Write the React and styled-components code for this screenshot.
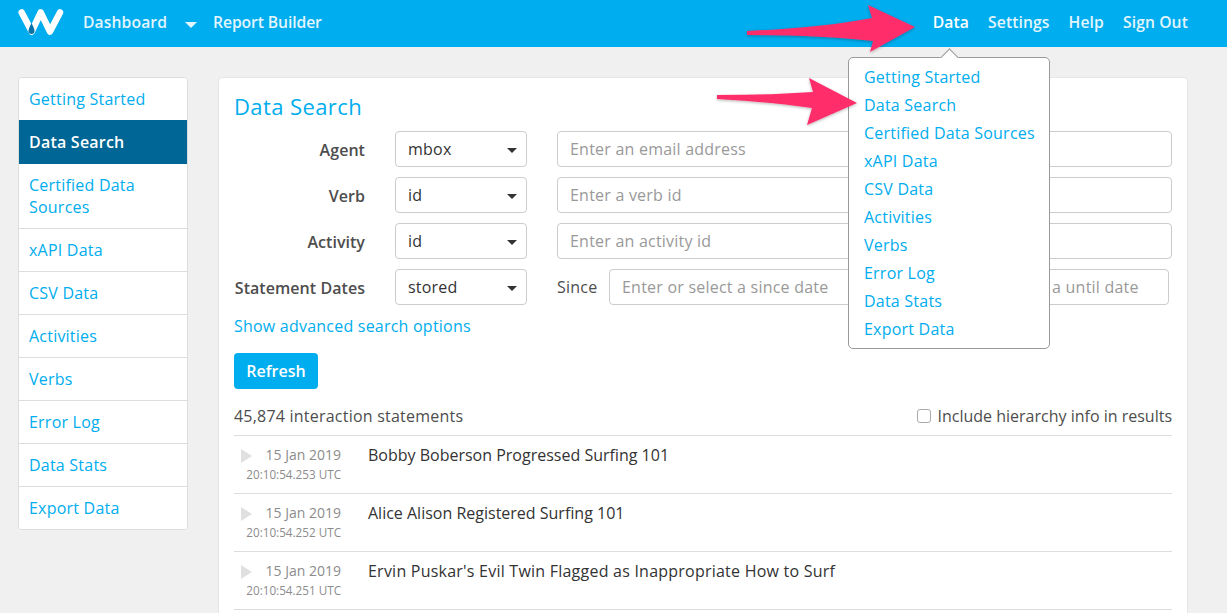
import React from 'react';
import styled, { createGlobalStyle } from 'styled-components';

const BLUE = '#00adee';
const FONT = '"Open Sans", "Liberation Sans", sans-serif';

const GlobalStyle = createGlobalStyle`
  html, body {
    margin: 0;
    height: 613px;
    overflow: hidden;
    background: #f0f0f0;
    font-family: ${FONT};
    font-size: 16px;
    letter-spacing: 0.22px;
    color: #4d4d4d;
  }
  * { box-sizing: border-box; }
`;

const Page = styled.div`
  position: relative;
  width: 1227px;
  height: 613px;
  overflow: hidden;
`;

const TopBar = styled.header`
  display: flex;
  align-items: center;
  height: 47px;
  padding: 0 39px 3px 18px;
  background: ${BLUE};
`;

const Logo = styled.svg`
  width: 46px;
  height: 27px;
  margin-right: 19px;
`;

const NavGroup = styled.nav`
  display: flex;
  align-items: center;
  gap: ${({ $gap }) => $gap}px;
  margin-left: ${({ $push }) => ($push ? 'auto' : '0')};
`;

const NavLink = styled.a`
  color: ${({ $active }) => ($active ? '#fff' : '#e3f5fd')};
  font-weight: 600;
  font-size: 15.7px;
  letter-spacing: ${({ $tight }) => ($tight ? '-0.1px' : '0.1px')};
`;

const Caret = styled.span`
  width: 0;
  height: 0;
  margin: 5px 16px 0 18px;
  border-left: 6px solid transparent;
  border-right: 6px solid transparent;
  border-top: 6px solid #e3f5fd;
`;

const Content = styled.div`
  display: flex;
  align-items: flex-start;
  gap: 30px;
  padding: 30px 39px 0 18px;
`;

const Sidebar = styled.aside`
  flex: 0 0 170px;
  background: #fff;
  border: 1px solid #ddd;
  border-radius: 4px;
  overflow: hidden;
`;

const SideItem = styled.a`
  display: block;
  padding: ${({ $active }) => ($active ? '11px 10px' : '10px')};
  line-height: 22px;
  color: ${({ $active }) => ($active ? '#fff' : BLUE)};
  background: ${({ $active }) => ($active ? '#006695' : '#fff')};
  font-weight: ${({ $active }) => ($active ? 600 : 500)};
  border-top: ${({ $plain }) => ($plain ? '0' : '1px solid #ddd')};
`;

const Panel = styled.main`
  flex: 1;
  height: 560px;
  padding: 15px 15px 0 15px;
  background: #fff;
  border: 1px solid #e6e6e6;
  border-radius: 4px;
`;

const Title = styled.h1`
  margin: 0 0 12px;
  font-size: 22px;
  letter-spacing: 0.4px;
  line-height: 26px;
  font-weight: 500;
  color: ${BLUE};
`;

const FormGrid = styled.div`
  display: grid;
  grid-template-columns: 131px 132px 1fr;
  column-gap: 30px;
  row-gap: 10px;
`;

const FieldLabel = styled.label`
  align-self: center;
  justify-self: end;
  padding-top: 2px;
  font-weight: 600;
  letter-spacing: 0.05px;
  white-space: nowrap;
`;

const SelectBox = styled.div`
  position: relative;
  display: flex;
  align-items: center;
  height: 36px;
  padding-left: 12px;
  border: 1px solid #ccc;
  border-radius: 4px;
  background: #fff;
  color: #333;
  font-weight: 500;

  &::after {
    content: '';
    position: absolute;
    right: 9px;
    top: 16px;
    border-left: 5px solid transparent;
    border-right: 5px solid transparent;
    border-top: 5px solid #333;
  }
`;

const TextBox = styled.div`
  display: flex;
  align-items: center;
  flex: ${({ $width }) => ($width ? `0 0 ${$width}px` : 1)};
  height: 36px;
  padding-left: 12px;
  border: 1px solid #ccc;
  border-radius: 4px;
  background: #fff;
  color: #999;
  font-weight: 500;
  white-space: nowrap;
  overflow: hidden;
`;

const DateRow = styled.div`
  display: flex;
  align-items: center;
  gap: 12px;
  padding-right: 3px;
`;

const DateLabel = styled.span`
  width: 40px;
  color: #4d4d4d;
  font-weight: 500;
`;

const AdvancedLink = styled.a`
  display: block;
  margin-top: 10px;
  line-height: 22px;
  color: ${BLUE};
  font-weight: 500;
`;

const RefreshButton = styled.button`
  display: block;
  margin-top: 16px;
  width: 84px;
  height: 36px;
  border: 0;
  border-radius: 4px;
  background: ${BLUE};
  color: #fff;
  font: 600 16px ${FONT};
`;

const CountRow = styled.div`
  display: flex;
  align-items: center;
  justify-content: space-between;
  height: 47px;
  padding-top: 8px;
  border-bottom: 1px solid #ddd;
  font-weight: 500;
`;

const CheckLabel = styled.label`
  display: flex;
  align-items: center;
  gap: 6px;
  letter-spacing: 0;
`;

const CheckBox = styled.span`
  width: 14px;
  height: 14px;
  border: 1px solid #aaa;
  border-radius: 3px;
  background: #fff;
`;

const StatementRow = styled.div`
  display: flex;
  align-items: flex-start;
  height: 58px;
  padding-top: 8px;
  border-bottom: 1px solid #ddd;
`;

const PlayMark = styled.span`
  flex: none;
  width: 0;
  height: 0;
  margin: 5px -12px 0 7px;
  border-top: 7px solid transparent;
  border-bottom: 7px solid transparent;
  border-left: 11px solid #e0e0e0;
`;

const StampCol = styled.div`
  flex: none;
  width: 101px;
  margin: 2px 27px 0 0;
  text-align: right;
  color: #8c8c8c;
  font-size: 14px;
  letter-spacing: 0;
  font-weight: 500;
  line-height: 18px;
  white-space: nowrap;
`;

const StampTime = styled.div`
  font-size: 11.7px;
  line-height: 20px;
`;

const StatementText = styled.div`
  color: #333;
  font-weight: 500;
  letter-spacing: ${({ $spacing }) => $spacing}px;
  line-height: 22px;
`;

const Dropdown = styled.div`
  position: absolute;
  top: 57px;
  left: 848px;
  width: 202px;
  height: 292px;
  padding: 5px 0 0 15px;
  background: #fff;
  border: 1px solid #999;
  border-radius: 5px;

  &::before {
    content: '';
    position: absolute;
    top: -7px;
    left: 94px;
    width: 12px;
    height: 12px;
    background: #fff;
    border-left: 1px solid #999;
    border-top: 1px solid #999;
    transform: rotate(45deg);
  }
`;

const DropItem = styled.a`
  display: block;
  height: 28px;
  line-height: 28px;
  color: ${BLUE};
  font-weight: 500;
  white-space: nowrap;
`;

const Annotation = styled.svg`
  position: absolute;
  top: 0;
  left: 0;
  width: 1227px;
  height: 613px;
  pointer-events: none;
`;

const sideItems = ['Getting Started', 'Data Search', 'Certified Data Sources', 'xAPI Data', 'CSV Data', 'Activities', 'Verbs', 'Error Log', 'Data Stats', 'Export Data'];

const fields = [
  ['Agent', 'mbox', 'Enter an email address'],
  ['Verb', 'id', 'Enter a verb id'],
  ['Activity', 'id', 'Enter an activity id'],
];

const statements = [
  ['20:10:54.253 UTC', 'Bobby Boberson Progressed Surfing 101', 0],
  ['20:10:54.252 UTC', 'Alice Alison Registered Surfing 101', 0],
  ['20:10:54.251 UTC', "Ervin Puskar's Evil Twin Flagged as Inappropriate How to Surf", 0.23],
];

const App = () => (
  <Page>
    <GlobalStyle />
    <TopBar>
      <Logo viewBox="0 0 46 27">
        <polyline points="3.7,3.5 13.7,22.5 22.7,3.5 32,22.5 42,3.5" fill="none" stroke="#fff" strokeWidth="6.5" strokeLinecap="round" strokeLinejoin="round" />
        <path d="M13.5 14 C11.5 18 10.5 20 10.5 22 a3 3 0 0 0 6 0 C16.5 20 15.5 18 13.5 14z" fill="#0b72a8" />
      </Logo>
      <NavGroup>
        <NavLink>Dashboard</NavLink>
        <Caret />
        <NavLink $tight>Report Builder</NavLink>
      </NavGroup>
      <NavGroup $push $gap={19}>
        <NavLink $active>Data</NavLink>
        <NavLink>Settings</NavLink>
        <NavLink>Help</NavLink>
        <NavLink>Sign Out</NavLink>
      </NavGroup>
    </TopBar>

    <Content>
      <Sidebar>
        {sideItems.map((item, i) => (
          <SideItem key={item} $plain={i < 3} $active={item === 'Data Search'}>{item}</SideItem>
        ))}
      </Sidebar>
      <Panel>
        <Title>Data Search</Title>
        <FormGrid>
          {fields.map(([label, value, hint]) => (
            <React.Fragment key={label}>
              <FieldLabel>{label}</FieldLabel>
              <SelectBox>{value}</SelectBox>
              <TextBox>{hint}</TextBox>
            </React.Fragment>
          ))}
          <FieldLabel>Statement Dates</FieldLabel>
          <SelectBox>stored</SelectBox>
          <DateRow>
            <DateLabel>Since</DateLabel>
            <TextBox>Enter or select a since date</TextBox>
            <DateLabel>Until</DateLabel>
            <TextBox $width={245}>Enter or select a until date</TextBox>
          </DateRow>
        </FormGrid>
        <AdvancedLink>Show advanced search options</AdvancedLink>
        <RefreshButton>Refresh</RefreshButton>
        <CountRow>
          <span>45,874 interaction statements</span>
          <CheckLabel><CheckBox />Include hierarchy info in results</CheckLabel>
        </CountRow>
        {statements.map(([time, text, spacing]) => (
          <StatementRow key={time}>
            <PlayMark />
            <StampCol>
              15 Jan 2019
              <StampTime>{time}</StampTime>
            </StampCol>
            <StatementText $spacing={spacing}>{text}</StatementText>
          </StatementRow>
        ))}
      </Panel>
    </Content>

    <Dropdown>
      {sideItems.map((item) => <DropItem key={item}>{item}</DropItem>)}
    </Dropdown>

    <Annotation viewBox="0 0 1227 613">
      <defs>
        <filter id="arrowShadow" x="-10%" y="-30%" width="120%" height="160%">
          <feDropShadow dx="0" dy="1" stdDeviation="1.5" floodColor="#000" floodOpacity="0.3" />
        </filter>
      </defs>
      <path d="M747 31 Q820 28 872 18 L868 5 L915 27 L870 52 L873 41 Q820 35 747 35z" fill="#ff2d6b" filter="url(#arrowShadow)" />
      <path d="M717 95 Q770 95 813 92 L809 78 L857 103 L807 125 L812 108 Q770 102 717 99z" fill="#ff2d6b" filter="url(#arrowShadow)" />
    </Annotation>
  </Page>
);

export default App;
